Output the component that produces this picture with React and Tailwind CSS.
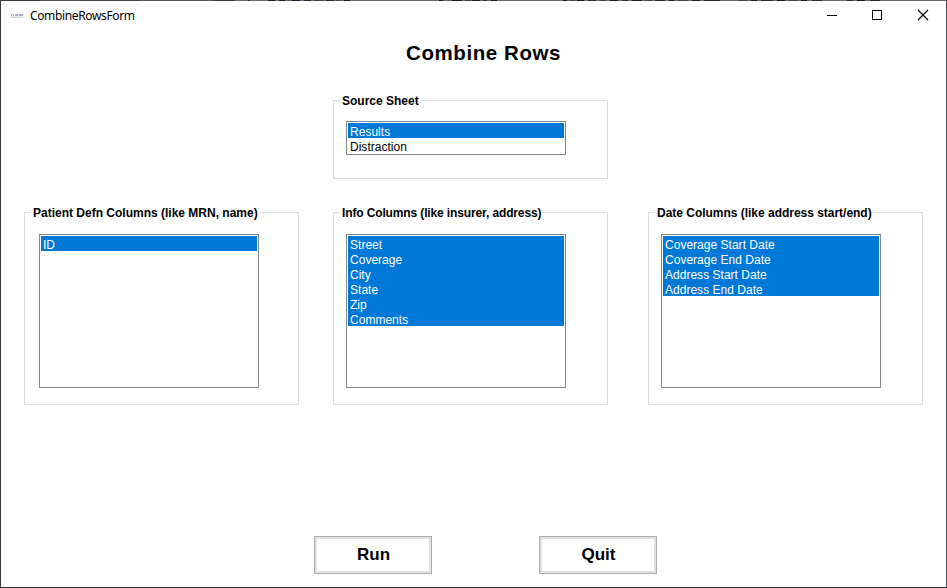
const FONT = "font-['Liberation_Sans',Arial,sans-serif]";

// Fragments of the worksheet behind the window, visible along its top edge.
const strip = [
  [0, 40, "#403c3e"], [40, 40, "#504e50"], [80, 60, "#444142"], [140, 73, "#59575a"], [213, 22, "#403d40"], [248, 2, "#2c2830"],
  [268, 7, "#1c1822"], [279, 6, "#1c1822"], [288, 3, "#66512f"], [292, 8, "#1c1a22"],
  [304, 7, "#2c2830"], [314, 9, "#4b4048"], [326, 8, "#2c2830"], [336, 4, "#44424a"], [344, 6, "#1c1822"],
  [439, 4, "#1c1822"], [447, 4, "#50607a"], [452, 10, "#1c1822"], [465, 6, "#443c38"],
  [472, 8, "#1c1822"], [483, 4, "#2c2830"], [491, 6, "#1c1822"],
  [563, 4, "#1c1822"], [570, 5, "#44424a"], [577, 7, "#1c1822"], [588, 8, "#2c2830"], [600, 6, "#4b4048"],
  [610, 8, "#1c1822"], [622, 6, "#2c2830"], [632, 10, "#1c1822"], [645, 7, "#44424a"], [655, 10, "#2c2830"],
  [669, 5, "#1c1822"], [678, 10, "#44424a"], [692, 8, "#1c1822"], [704, 16, "#2c2830"],
  [739, 8, "#4b4048"], [751, 6, "#1c1822"], [761, 12, "#2c2830"], [777, 8, "#1c1822"], [789, 8, "#44424a"],
  [801, 6, "#1c1822"], [812, 10, "#2c2830"], [847, 6, "#2c2830"], [857, 8, "#1c1822"], [870, 10, "#2c2830"],
];

function AppIcon() {
  return (
    <svg className="ml-[9px] h-4 w-4" viewBox="0 0 16 16" shapeRendering="crispEdges">
      <path d="M1 6.5h3M5 6.5h8" stroke="#b4b5c8" />
      <path d="M1 7.5h1M3 7.5h1M5 7.5h3M9 7.5h4" stroke="#a6a9c0" />
      <path d="M0 8.5h14" stroke="#eceef3" />
      <path d="M1 9.5h12" stroke="#ccd3df" />
    </svg>
  );
}

function TitleBar() {
  return (
    <header className="flex h-[30px] items-center">
      <AppIcon />
      <span className="ml-1 font-['Noto_Sans','Open_Sans',sans-serif] text-[12px] leading-[16px] tracking-[-0.36px]">
        CombineRowsForm
      </span>
      <svg className="ml-auto h-[30px] w-[138px]" viewBox="0 0 138 30" fill="none" stroke="#000">
        <path d="M19 14.5h10" shapeRendering="crispEdges" />
        <path d="M64.5 9.5h9v9h-9z" shapeRendering="crispEdges" />
        <path d="M110 9l10 10M120 9l-10 10" strokeWidth="1.1" />
      </svg>
    </header>
  );
}

function ListBox({ items, selected, className }) {
  return (
    <ul className={`w-[220px] border border-[#828790] p-px text-[12px] leading-[15px] tracking-[0.02px] ${className}`}>
      {items.map((item, i) => (
        <li key={item} className={`h-[15px] pt-[2px] pl-[2px] ${i < selected ? "bg-[#0078d7] text-white" : "text-black"}`}>
          {item}
        </li>
      ))}
    </ul>
  );
}

function GroupBox({ title, tracking = "tracking-normal", className, children }) {
  return (
    <section className={`w-[275px] border border-[#dcdcdc] ${className}`}>
      <h2 className={`-mt-2 ml-[6px] h-[15px] w-fit whitespace-nowrap bg-white px-[2px] pt-px text-[12px] font-bold leading-[15px] ${tracking}`}>
        {title}
      </h2>
      {children}
    </section>
  );
}

function Button({ children }) {
  return (
    <button className="h-[38px] w-[118px] border border-[#adadad] bg-[#e1e1e1] p-[2px]">
      <span className="flex h-full items-center justify-center bg-white pl-px text-[17px] font-bold">{children}</span>
    </button>
  );
}

export default function App() {
  return (
    <div className={`relative flex h-[588px] w-[947px] flex-col border border-t-[#6b696b] border-r-[#4a4c50] border-b-[#262626] border-l-[#3c3a3c] bg-white text-black ${FONT}`}>
      <svg className="absolute -top-px -left-px h-px w-[947px]" viewBox="0 0 947 1" shapeRendering="crispEdges">
        {strip.map(([x, w, fill]) => (
          <rect key={x} x={x} width={w} height="1" fill={fill} />
        ))}
      </svg>
      <TitleBar />
      <h1 className="mt-2 ml-[405px] h-[28px] text-[20.5px] font-bold leading-[28px] tracking-[0.58px]">Combine Rows</h1>
      <GroupBox title="Source Sheet" className="mt-[33px] ml-[332px] h-[79px]">
        <ListBox items={["Results", "Distraction"]} selected={1} className="mt-[13px] ml-[12px] h-[34px]" />
      </GroupBox>
      <main className="mt-[33px] flex">
        <GroupBox title="Patient Defn Columns (like MRN, name)" className="ml-[23px] h-[193px]">
          <ListBox items={["ID"]} selected={1} className="mt-[14px] ml-[14px] h-[154px]" />
        </GroupBox>
        <GroupBox title="Info Columns (like insurer, address)" tracking="tracking-[-0.13px]" className="ml-[34px] h-[193px]">
          <ListBox
            items={["Street", "Coverage", "City", "State", "Zip", "Comments"]}
            selected={6}
            className="mt-[14px] ml-[12px] h-[154px]"
          />
        </GroupBox>
        <GroupBox title="Date Columns (like address start/end)" tracking="tracking-[-0.02px]" className="ml-[40px] h-[193px]">
          <ListBox
            items={["Coverage Start Date", "Coverage End Date", "Address Start Date", "Address End Date"]}
            selected={4}
            className="mt-[14px] ml-[12px] h-[154px]"
          />
        </GroupBox>
      </main>
      <footer className="mt-[131px] ml-[313px] flex gap-[107px]">
        <Button>Run</Button>
        <Button>Quit</Button>
      </footer>
    </div>
  );
}
